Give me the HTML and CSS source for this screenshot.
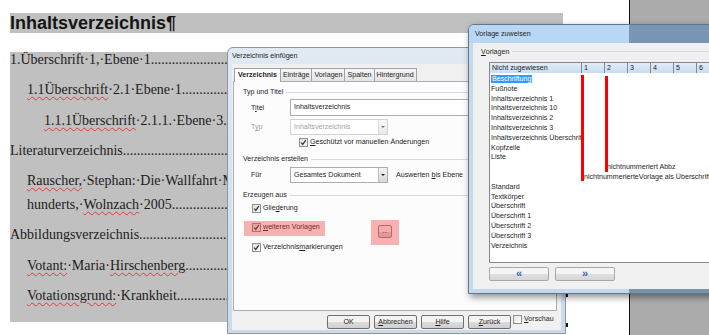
FILE: index.html
```html
<!DOCTYPE html>
<html lang="de">
<head>
    <meta charset="UTF-8">
    <title>Verzeichnis einfügen</title>
    <link rel="stylesheet" href="styles.css">
</head>
<body>
    <div class="page">
        <h1 class="doc-title">Inhaltsverzeichnis¶</h1>
        <div class="toc">
            <p>1.Überschrift·1,·Ebene·1<span class="leader">..........................................................................................</span></p>
            <p class="lvl2"><span class="sp">1.1Überschrift</span>·2.1·Ebene·1<span class="leader">..........................................................................................</span></p>
            <p class="lvl3"><span class="sp">1.1.1Überschrift</span>·2.1.1.·Ebene·3<span class="leader">..........................................................................................</span></p>
            <p>Literaturverzeichnis<span class="leader">..........................................................................................</span></p>
            <p class="lvl2"><span class="sp">Rauscher,</span>·Stephan:·Die·Wallfahrt·Maria·Hirschenberg·des·18.·Jahr-<br>hunderts,·<span class="sp">Wolnzach</span>·2005<span class="leader">..........................................................................................</span></p>
            <p>Abbildungsverzeichnis<span class="leader">..........................................................................................</span></p>
            <p class="lvl2"><span class="sp">Votant:</span>·Maria·<span class="sp">Hirschenberg</span><span class="leader">..........................................................................................</span></p>
            <p class="lvl2"><span class="sp">Votationsgrund:</span>·Krankheit<span class="leader">..........................................................................................</span></p>
            <p class="lvl2 last"><span class="leader">..........................................................................................</span></p>
        </div>
    </div>
    <div class="desk"></div>

    <span class="handle h1"></span>
    <span class="handle h2"></span>

    <!-- Verzeichnis einfügen -->
    <div class="dialog dlg-index">
        <div class="caption">Verzeichnis einfügen</div>
        <div class="client">
            <div class="tabs">
                <span class="tab active">Verzeichnis</span>
                <span class="tab">Einträge</span>
                <span class="tab">Vorlagen</span>
                <span class="tab">Spalten</span>
                <span class="tab">Hintergrund</span>
            </div>
            <div class="tab-page">
                <div class="group">Typ und Titel</div>
                <div class="field">
                    <span class="lbl">T<u>i</u>tel</span>
                    <div class="textbox">Inhaltsverzeichnis</div>
                </div>
                <div class="field typ disabled">
                    <span class="lbl">T<u>y</u>p</span>
                    <div class="combo"><span class="combo-text">Inhaltsverzeichnis</span><span class="drop"></span></div>
                </div>
                <div class="check protect">
                    <span class="cb"><svg viewBox="0 0 7 7"><path d="M1.2 3.6l1.6 1.8 3-4.2"/></svg></span>
                    <span><u>G</u>eschützt vor manuellen Änderungen</span>
                </div>

                <div class="group gap">Verzeichnis erstellen</div>
                <div class="field fuer">
                    <span class="lbl">Für</span>
                    <div class="combo"><span class="combo-text">Gesamtes Dokument</span><span class="drop"></span></div>
                    <span class="level">Auswerten <u>b</u>is Ebene</span>
                </div>

                <div class="group gap">Erzeugen aus</div>
                <div class="check opt">
                    <span class="cb"><svg viewBox="0 0 7 7"><path d="M1.2 3.6l1.6 1.8 3-4.2"/></svg></span>
                    <span>Glie<u>d</u>erung</span>
                </div>
                <div class="more-row">
                    <div class="check hl hl-label">
                        <span class="cb"><svg viewBox="0 0 7 7"><path d="M1.2 3.6l1.6 1.8 3-4.2"/></svg></span>
                        <span><u>w</u>eiteren Vorlagen</span>
                    </div>
                    <div class="hl hl-btn"><span class="dots-btn">...</span></div>
                </div>
                <div class="check opt marks">
                    <span class="cb"><svg viewBox="0 0 7 7"><path d="M1.2 3.6l1.6 1.8 3-4.2"/></svg></span>
                    <span>Verzeichnis<u>m</u>arkierungen</span>
                </div>
            </div>
            <div class="button-row">
                <span class="btn">OK</span>
                <span class="btn"><u>A</u>bbrechen</span>
                <span class="btn"><u>H</u>ilfe</span>
                <span class="btn"><u>Z</u>urück</span>
                <span class="check preview">
                    <span class="cb"></span>
                    <span><u>V</u>orschau</span>
                </span>
            </div>
        </div>
    </div>

    <!-- Vorlage zuweisen -->
    <div class="dialog dlg-assign">
        <div class="caption">Vorlage zuweisen</div>
        <div class="assign-body">
            <div class="group"><u>V</u>orlagen</div>
            <div class="list">
                <div class="list-head">
                    <span>Nicht zugewiesen</span>
                    <span>1</span><span>2</span><span>3</span><span>4</span><span>5</span><span>6</span>
                </div>
                <div class="list-rows">
                    <div class="row"><span><span class="sel">Beschriftung</span></span></div>
                    <div class="row"><span>Fußnote</span></div>
                    <div class="row"><span>Inhaltsverzeichnis 1</span></div>
                    <div class="row"><span>Inhaltsverzeichnis 10</span></div>
                    <div class="row"><span>Inhaltsverzeichnis 2</span></div>
                    <div class="row"><span>Inhaltsverzeichnis 3</span></div>
                    <div class="row"><span>Inhaltsverzeichnis Überschrift</span></div>
                    <div class="row"><span>Kopfzeile</span></div>
                    <div class="row"><span>Liste</span></div>
                    <div class="row"><span class="col3">nichtnummeriert Abbz</span></div>
                    <div class="row"><span class="col2">nichtnummerierteVorlage als Überschrift</span></div>
                    <div class="row"><span>Standard</span></div>
                    <div class="row"><span>Textkörper</span></div>
                    <div class="row"><span>Überschrift</span></div>
                    <div class="row"><span>Überschrift 1</span></div>
                    <div class="row"><span>Überschrift 2</span></div>
                    <div class="row"><span>Überschrift 3</span></div>
                    <div class="row"><span>Verzeichnis</span></div>
                </div>
                <span class="mark m1"></span>
                <span class="mark m2"></span>
            </div>
            <div class="nav">
                <span class="navbtn">«</span>
                <span class="navbtn">»</span>
            </div>
        </div>
    </div>
</body>
</html>
```

FILE: styles.css
```css
* {
    box-sizing: border-box;
}

body {
    margin: 0;
    width: 709px;
    height: 335px;
    overflow: hidden;
    position: relative;
    display: flex;
    background: #ababab;
}

/* ---- document ---- */

.page {
    width: 630px;
    height: 100%;
    overflow: hidden;
    background: #fff;
    border-right: 1px solid #111;
    padding: 13px 0 0 10px;
}

.desk {
    flex: 1;
    background: #ababab;
}

.doc-title {
    margin: 0;
    width: 553px;
    height: 20px;
    line-height: 19px;
    background: #c0c0c0;
    font: bold 18px "Liberation Sans", Arial, sans-serif;
    color: #141414;
}

.toc {
    margin-top: 15px;
    width: 553px;
    height: 274px;
    overflow: hidden;
    background: linear-gradient(transparent 4px, #c0c0c0 4px);
    font: 14px/24px "Liberation Serif", "Times New Roman", serif;
    color: #1c1c1c;
}

.toc p {
    margin: 0 0 6.25px;
    white-space: nowrap;
    overflow: hidden;
}

.toc p.last {
    margin-bottom: 0;
}

.toc .lvl2 {
    padding-left: 17px;
}

.toc .lvl3 {
    padding-left: 34px;
}

.sp {
    text-decoration-line: underline;
    text-decoration-style: wavy;
    text-decoration-color: #e23a3a;
    text-decoration-thickness: 1px;
    text-underline-offset: 2px;
}

.handle {
    position: absolute;
    left: 565px;
    width: 3px;
    height: 4px;
    background: #111;
}

.h1 { top: 293px; }
.h2 { top: 323px; }

/* ---- dialogs ---- */

.dialog {
    position: absolute;
    font-family: "Liberation Sans", Arial, sans-serif;
    font-size: 7.1px;
    color: #1e1e1e;
    border-radius: 6px 6px 0 0;
}

.dialog u {
    text-underline-offset: 1px;
}

.caption {
    height: 16px;
    line-height: 16px;
    white-space: nowrap;
}

.group {
    display: flex;
    align-items: center;
    height: 12px;
    padding-left: 9px;
    white-space: nowrap;
}

.group::after {
    content: "";
    flex: 1;
    margin-left: 3px;
    border-top: 1px solid #d3d9df;
}

.group.gap {
    margin-top: 6px;
}

.check {
    display: flex;
    align-items: center;
    gap: 2px;
    height: 10px;
    white-space: nowrap;
}

.cb {
    width: 9px;
    height: 9px;
    border: 1px solid #8e8f8f;
    background: linear-gradient(135deg, #dedede, #fbfbfb);
    display: inline-flex;
    flex: none;
}

.cb svg {
    width: 7px;
    height: 7px;
    fill: none;
    stroke: #2b3a4a;
    stroke-width: 1.3;
}

/* Verzeichnis einfügen */

.dlg-index {
    left: 227px;
    top: 47px;
    width: 339px;
    height: 287px;
    padding: 0 4px 3px;
    border: 1px solid #8a97a6;
    background: linear-gradient(#e1e9f2, #cbd9e9);
}

.client {
    height: 266px;
    padding: 4px 0 0 1px;
    background: #f0f0f0;
}

.tabs {
    display: flex;
    height: 13px;
    padding-left: 1px;
    position: relative;
    z-index: 1;
}

.tab {
    height: 13px;
    padding: 0 2px;
    line-height: 12px;
    border: 1px solid #9ca3ab;
    border-bottom: none;
    margin-right: -1px;
    background: linear-gradient(#f6f6f6, #e2e2e2);
    white-space: nowrap;
}

.tab.active {
    height: 14px;
    padding: 0 3px;
    font-weight: bold;
    background: #fcfcfc;
}

.tab-page {
    width: 324px;
    height: 230px;
    padding-top: 4px;
    border: 1px solid #a9aeb5;
    background: #fcfcfc;
}

.field {
    display: flex;
    align-items: center;
    height: 17px;
    margin-top: 1px;
    padding-left: 17px;
    white-space: nowrap;
}

.lbl {
    width: 39px;
}

.textbox {
    width: 260px;
    height: 17px;
    line-height: 15px;
    padding-left: 3px;
    border: 1px solid #abadb3;
    background: #fff;
}

.combo {
    display: flex;
    width: 98px;
    height: 16px;
    border: 1px solid #abadb3;
    background: #fff;
}

.combo-text {
    flex: 1;
    line-height: 14px;
    padding-left: 3px;
}

.drop {
    width: 9px;
    position: relative;
    border-left: 1px solid #b8bcc2;
    background: linear-gradient(#f2f2f2, #d8d8d8);
}

.drop::after {
    content: "";
    position: absolute;
    left: 2px;
    top: 6px;
    border: 2px solid transparent;
    border-top: 2.5px solid #222;
}

.field.typ {
    height: 16px;
    margin-top: 3px;
}

.disabled .lbl,
.disabled .combo-text {
    color: #a3a3a3;
}

.disabled .combo {
    border-color: #cfd1d5;
}

.disabled .drop {
    background: linear-gradient(#f7f7f7, #e9e9e9);
    border-left-color: #d6d8dc;
}

.disabled .drop::after {
    border-top-color: #7a7a7a;
}

.check.protect {
    margin-top: 2px;
    padding-left: 65px;
}

.field.fuer {
    height: 16px;
    margin-top: 2px;
}

.level {
    margin-left: 8px;
}

.check.opt {
    margin-top: 2px;
    padding-left: 18px;
}

.more-row {
    display: flex;
    align-items: flex-start;
    height: 16px;
    margin-top: 7px;
    padding-left: 10px;
}

.hl {
    position: relative;
}

.hl::after {
    content: "";
    position: absolute;
    inset: 0;
    background: rgba(240, 60, 60, 0.39);
}

.hl-label {
    width: 81px;
    height: 15px;
    margin-top: 1px;
    padding: 0 0 3px 8px;
}

.hl-btn {
    width: 28px;
    height: 25px;
    margin-left: 46px;
    padding: 5px 0 0 7px;
}

.dots-btn {
    display: block;
    width: 14px;
    height: 13px;
    line-height: 10px;
    text-align: center;
    border: 1px solid #8a8a8a;
    border-radius: 2px;
    background: linear-gradient(#f3f3f3 50%, #dcdcdc 50%, #d0d0d0);
}

.check.marks {
    margin-top: 6px;
}

.button-row {
    display: flex;
    align-items: flex-start;
    gap: 4px;
    margin-top: 4px;
    padding-left: 94px;
}

.btn {
    width: 43px;
    height: 14px;
    line-height: 12px;
    text-align: center;
    border: 1px solid #707070;
    border-radius: 2px;
    background: linear-gradient(#f3f3f3 50%, #dddddd 50%, #cfcfcf);
}

.check.preview {
    margin-left: -2px;
    height: 9px;
    align-items: flex-start;
    line-height: 8px;
}

.preview .cb {
    background: linear-gradient(135deg, #e4e4e4, #fff);
}

/* Vorlage zuweisen */

.dlg-assign {
    left: 468px;
    top: 24px;
    width: 260px;
    height: 270px;
    border: 1px solid #62778d;
    background: linear-gradient(90deg, #c6d8eb 160px, #7890a8 160px);
    box-shadow: 2px 3px 7px rgba(0, 0, 0, 0.45);
}

.dlg-assign .caption {
    height: 18px;
    line-height: 18px;
    padding-left: 6px;
    border-radius: 5px 5px 0 0;
    background: linear-gradient(90deg, #b8d7f5 160px, #7896b4 160px);
}

.assign-body {
    height: 246px;
    margin: 0 4px;
    padding-top: 3px;
    background: #f0f0f0;
}

.assign-body .group {
    height: 11px;
    padding-left: 8px;
}

.list {
    position: relative;
    width: 240px;
    height: 201px;
    margin: 5px 0 0 16px;
    border: 1px solid #828790;
    background: #fff;
}

.list-head,
.row {
    display: grid;
    grid-template-columns: 92px repeat(6, 23px);
    white-space: nowrap;
}

.list-head {
    height: 10px;
    line-height: 10px;
    background: linear-gradient(#e1ecf7, #c9dcf0);
}

.list-head span {
    padding-left: 2px;
    border-right: 1px solid #7f8b99;
}

.list-rows {
    padding-top: 2px;
    color: #262626;
}

.row {
    height: 9.8px;
    line-height: 9.8px;
}

.row span {
    padding-left: 1px;
}

.row .col2 {
    grid-column: 2;
    padding-left: 2px;
}

.row .col3 {
    grid-column: 3;
    padding-left: 2px;
}

.sel {
    background: #3399ff;
    color: #fff;
    padding: 0 1px;
}

.mark {
    position: absolute;
    width: 3px;
    background: #ff0000;
}

.m1 {
    left: 91px;
    top: 12px;
    height: 106px;
}

.m2 {
    left: 115px;
    top: 13px;
    height: 96px;
}

.nav {
    display: flex;
    gap: 6px;
    margin: 4px 0 0 16px;
}

.navbtn {
    width: 60px;
    height: 14px;
    line-height: 11px;
    text-align: center;
    font-size: 11px;
    font-weight: bold;
    color: #3b64a8;
    border: 1px solid #a8a8a8;
    border-radius: 2px;
    background: linear-gradient(#f4f4f4 50%, #e0e0e0 50%, #d6d6d6);
}
```
